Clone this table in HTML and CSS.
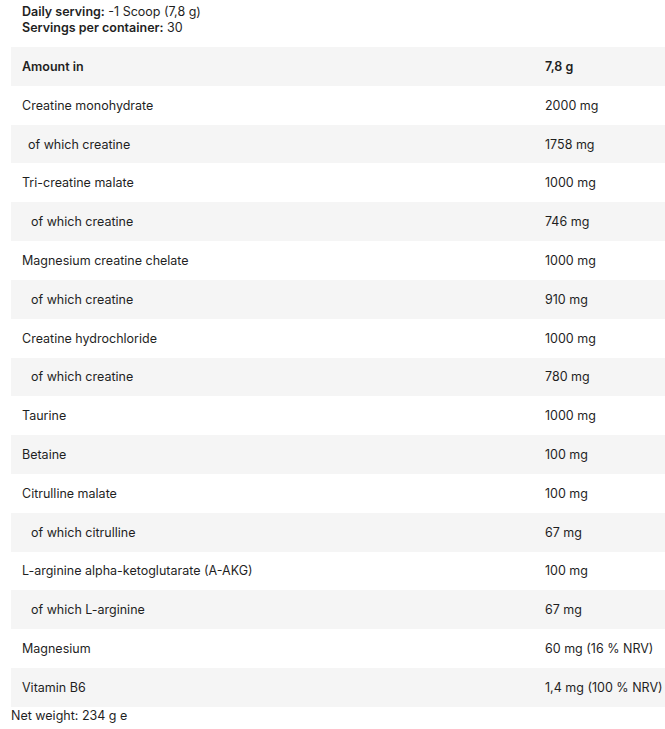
FILE: index.html
```html
<!DOCTYPE html>
<html>
<head>
<meta charset="utf-8">
<link rel="stylesheet" href="styles.css">
</head>
<body>
<div class="page">
  <div class="intro">
    <div><b>Daily serving:</b> -1 Scoop (7,8 g)</div>
    <div><b>Servings per container:</b> 30</div>
  </div>
  <div class="table">
    <div class="row head"><span class="name">Amount in</span><span class="val">7,8 g</span></div>
    <div class="row"><span class="name">Creatine monohydrate</span><span class="val">2000 mg</span></div>
    <div class="row"><span class="name sub1">of which creatine</span><span class="val">1758 mg</span></div>
    <div class="row"><span class="name">Tri-creatine malate</span><span class="val">1000 mg</span></div>
    <div class="row"><span class="name sub">of which creatine</span><span class="val">746 mg</span></div>
    <div class="row"><span class="name">Magnesium creatine chelate</span><span class="val">1000 mg</span></div>
    <div class="row"><span class="name sub">of which creatine</span><span class="val">910 mg</span></div>
    <div class="row"><span class="name">Creatine hydrochloride</span><span class="val">1000 mg</span></div>
    <div class="row"><span class="name sub">of which creatine</span><span class="val">780 mg</span></div>
    <div class="row"><span class="name">Taurine</span><span class="val">1000 mg</span></div>
    <div class="row"><span class="name">Betaine</span><span class="val">100 mg</span></div>
    <div class="row"><span class="name">Citrulline malate</span><span class="val">100 mg</span></div>
    <div class="row"><span class="name sub">of which citrulline</span><span class="val">67 mg</span></div>
    <div class="row"><span class="name">L-arginine alpha-ketoglutarate (A-AKG)</span><span class="val">100 mg</span></div>
    <div class="row"><span class="name sub">of which L-arginine</span><span class="val">67 mg</span></div>
    <div class="row"><span class="name">Magnesium</span><span class="val">60 mg (16 % NRV)</span></div>
    <div class="row"><span class="name">Vitamin B6</span><span class="val">1,4 mg (100 % NRV)</span></div>
  </div>
  <div class="net">Net weight: 234 g e</div>
</div>
</body>
</html>
```

FILE: styles.css
```css
html, body {
  margin: 0;
  padding: 0;
  background: #ffffff;
}
body {
  font-family: Inter, "Open Sans", sans-serif;
  font-size: 12.5px;
  color: #1f1f1f;
}
.page {
  padding: 4px 0 0 11px;
}
.intro {
  padding-left: 11px;
  line-height: 16px;
}
.intro b {
  font-weight: 600;
}
.table {
  margin-top: 11px;
  width: 660px;
}
.row {
  display: grid;
  grid-template-columns: 523px 1fr;
  height: 38.82px;
  align-items: center;
  background: #ffffff;
}
.row:nth-child(odd) {
  background: #f5f5f5;
}
.name, .val {
  padding-left: 11px;
  white-space: nowrap;
}
.head {
  font-weight: 600;
}
.sub1 {
  padding-left: 17px;
}
.sub {
  padding-left: 20px;
}
.net {
  line-height: 16px;
  padding-top: 1px;
}
```
